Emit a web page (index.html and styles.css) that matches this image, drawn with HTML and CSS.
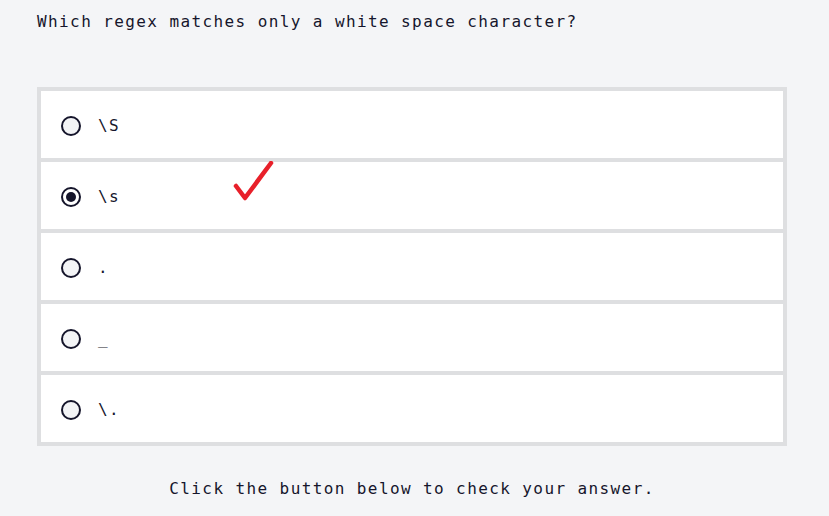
FILE: index.html
```html
<!DOCTYPE html>
<html>
<head>
<meta charset="utf-8">
<link rel="stylesheet" href="styles.css">
</head>
<body>
<main class="quiz">
  <p class="question">Which regex matches only a white space character?</p>
  <div class="options">
    <label class="option">
      <span class="radio"></span>
      <span class="label">\S</span>
    </label>
    <label class="option">
      <span class="radio checked"></span>
      <span class="label">\s</span>
      <svg class="tick" width="44" height="42" viewBox="0 0 44 42">
        <path d="M4 25 L13 37 L39 2" fill="none" stroke="#e8202a" stroke-width="4.5" stroke-linecap="round" stroke-linejoin="round"/>
      </svg>
    </label>
    <label class="option">
      <span class="radio"></span>
      <span class="label">.</span>
    </label>
    <label class="option">
      <span class="radio"></span>
      <span class="label">_</span>
    </label>
    <label class="option">
      <span class="radio"></span>
      <span class="label">\.</span>
    </label>
  </div>
  <p class="hint">Click the button below to check your answer.</p>
</main>
</body>
</html>
```
FILE: styles.css
```css
html, body {
  margin: 0;
  padding: 0;
  background: #f4f5f7;
}
body {
  font-family: "DejaVu Sans Mono", "Liberation Mono", monospace;
  font-size: 16px;
  line-height: 24px;
  color: #16162c;
  letter-spacing: 1.4px;
}
.quiz {
  width: 750px;
  padding: 10px 0 0 37px;
}
.question {
  margin: 0 0 53px 0;
}
.options {
  display: flex;
  flex-direction: column;
  gap: 4px;
  background: #dedfe1;
  border: 4px solid #dedfe1;
}
.option {
  position: relative;
  display: flex;
  align-items: center;
  height: 67px;
  box-sizing: border-box;
  padding: 2px 20px 0 20px;
  background: #ffffff;
}
.radio {
  width: 20px;
  height: 20px;
  box-sizing: border-box;
  border: 2px solid #15152b;
  border-radius: 50%;
  background: #f3f4f6;
  margin-right: 17px;
  flex: none;
  display: flex;
  align-items: center;
  justify-content: center;
}
.radio.checked {
  background: #ffffff;
}
.radio.checked::after {
  content: "";
  width: 10px;
  height: 10px;
  border-radius: 50%;
  background: #15152b;
}
.label {
  font-size: 16px;
}
.tick {
  position: absolute;
  left: 191px;
  top: -1px;
}
.hint {
  margin: 31px 0 0 0;
  text-align: center;
}
```
